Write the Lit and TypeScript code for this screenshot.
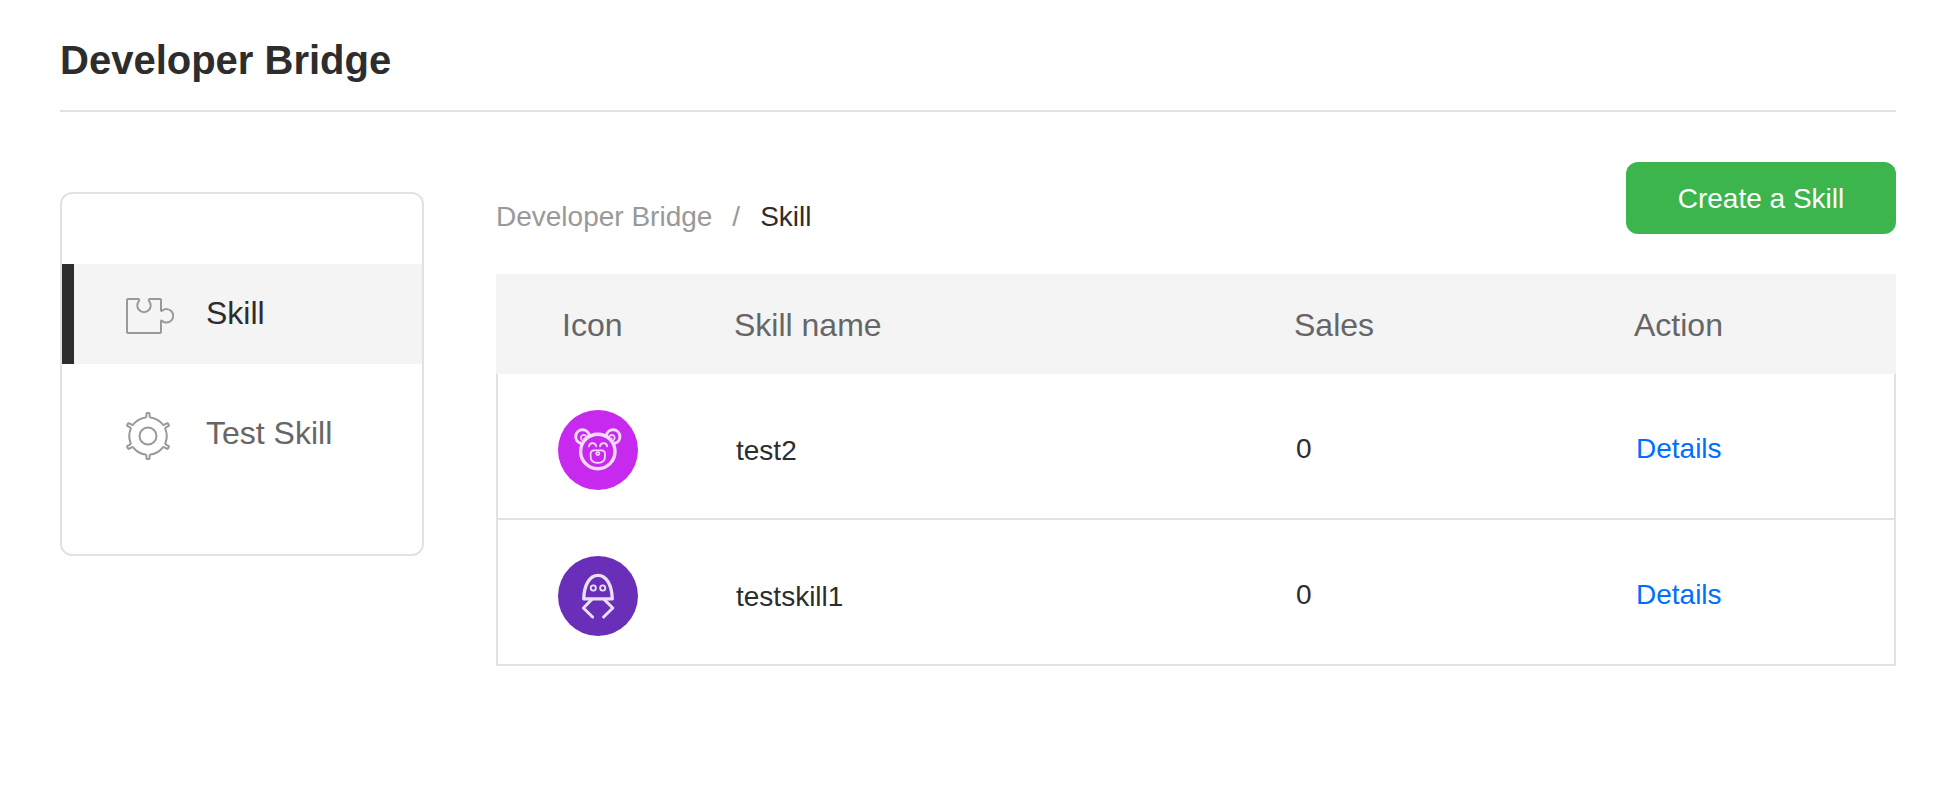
import { LitElement, html, svg, css, TemplateResult } from "lit";
import { customElement, property } from "lit/decorators.js";

type Glyph = "bear" | "robot";

interface Skill {
  glyph: Glyph;
  name: string;
  sales: number;
}

const SKILLS: Skill[] = [
  { glyph: "bear", name: "test2", sales: 0 },
  { glyph: "robot", name: "testskill1", sales: 0 },
];

/* Outline of a six-toothed gear centred on (cx, cy); the side teeth are a little longer. */
function gearPath(cx: number, cy: number): string {
  const ring = 19;
  const at = (deg: number, x: number, y: number) => {
    const a = (deg * Math.PI) / 180;
    const px = cx + x * Math.cos(a) - y * Math.sin(a);
    const py = cy + x * Math.sin(a) + y * Math.cos(a);
    return `${px.toFixed(2)} ${py.toFixed(2)}`;
  };
  let d = "";
  for (let deg = 0; deg < 360; deg += 60) {
    const tip = deg % 180 === 0 ? 23 : 23.6;
    d += deg === 0 ? `M${at(deg, -2.4, -18.6)}` : `A${ring} ${ring} 0 0 1 ${at(deg, -2.4, -18.6)}`;
    d += `Q${at(deg, -1.6, -18.9)} ${at(deg, -1.6, -19.8)}`;
    d += `L${at(deg, -1.6, -tip + 1)}Q${at(deg, -1.6, -tip)} ${at(deg, -0.6, -tip)}`;
    d += `L${at(deg, 0.6, -tip)}Q${at(deg, 1.6, -tip)} ${at(deg, 1.6, -tip + 1)}`;
    d += `L${at(deg, 1.6, -19.8)}Q${at(deg, 1.6, -18.9)} ${at(deg, 2.4, -18.6)}`;
  }
  return `${d}A${ring} ${ring} 0 0 1 ${at(0, -2.4, -18.6)}Z`;
}

const puzzleIcon = html`<svg width="48" height="36" viewBox="0 0 48 36" fill="none" stroke="#999" stroke-width="2" stroke-linejoin="round">
  <path d="M2 1H12.2Q13.9 1.4 12.9 3.1A6.7 6.7 0 1 0 23.1 3.1Q22.1 1.4 23.8 1H34Q35 1 35 2V12.3Q35.1 13.7 36.4 12.5A6.7 6.7 0 1 1 36.4 23.1Q35.1 21.9 35 23.3V34Q35 35 34 35H2Q1 35 1 34V2Q1 1 2 1Z" />
</svg>`;

const gearIcon = html`<svg width="44" height="48" viewBox="0 0 44 48" fill="none" stroke="#999" stroke-width="2" stroke-linejoin="round">
  <path d=${gearPath(22, 24)} />
  <circle cx="22" cy="24" r="8.5" />
</svg>`;

const glyphs: Record<Glyph, TemplateResult> = {
  bear: svg`<circle cx="40" cy="40" r="40" fill="#c829ee" />
    <g fill="none" stroke="#f8dcfd" stroke-linecap="round">
      <g stroke-width="3">
        <path d="M22.6 33.2A6.8 6.8 0 1 1 31.2 25.6" />
        <path d="M57 33.2A6.8 6.8 0 1 0 48.4 25.6" />
        <circle cx="39.8" cy="41.5" r="17.2" stroke-width="3.4" />
      </g>
      <g stroke-width="1.7">
        <path d="M24.6 30.5A2.9 2.9 0 1 1 28.6 27.2" />
        <path d="M55 30.5A2.9 2.9 0 1 0 51 27.2" />
        <circle cx="26.2" cy="28.3" r="0.5" stroke-width="1" />
        <circle cx="53.4" cy="28.3" r="0.5" stroke-width="1" />
        <path d="M31 36.4C31.5 32 37.7 32 38.2 36.4M42 36.4C42.5 32 48.7 32 49.2 36.4" />
        <path d="M36.2 40.3H43.4Q47 40.3 47 44V46.2Q47 52.8 39.8 52.8T32.6 46.2V44Q32.6 40.3 36.2 40.3Z" />
        <circle cx="39.8" cy="43.6" r="1.6" />
      </g>
    </g>`,
  robot: svg`<circle cx="40" cy="40" r="40" fill="#6a2fb8" />
    <g fill="none" stroke="#eae0f6" stroke-width="3.3" stroke-linecap="round" stroke-linejoin="round">
      <path d="M25.7 42.8C26.2 29 31.6 19.4 40 19.4S53.8 29 54.3 42.8Z" />
      <path d="M33.6 43.6L25.4 52L34.6 61M46.4 43.6L54.8 52L45.6 61" stroke-width="3" />
      <circle cx="35.3" cy="32" r="2.6" stroke-width="1.8" />
      <circle cx="44.7" cy="32" r="2.6" stroke-width="1.8" />
    </g>`,
};

@customElement("skill-avatar")
export class SkillAvatar extends LitElement {
  @property() glyph: Glyph = "bear";

  static styles = css`
    :host {
      display: block;
      width: 80px;
      height: 80px;
    }
    svg {
      display: block;
    }
  `;

  render() {
    return html`<svg width="80" height="80" viewBox="0 0 80 80">${glyphs[this.glyph]}</svg>`;
  }
}

@customElement("side-menu")
export class SideMenu extends LitElement {
  static styles = css`
    :host {
      display: block;
      flex: none;
      box-sizing: border-box;
      width: 364px;
      margin-top: 80px;
      padding: 70px 0;
      border: 2px solid #e2e2e2;
      border-radius: 12px;
    }
    .list {
      display: flex;
      flex-direction: column;
      gap: 20px;
    }
    .item {
      display: flex;
      align-items: center;
      box-sizing: border-box;
      height: 100px;
      padding-left: 52px;
      border-left: 12px solid transparent;
      color: #666;
      font-size: 32px;
      line-height: 40px;
    }
    .active {
      border-left-color: #2d2d2d;
      background: #f4f4f4;
      color: #2d2d2d;
    }
    .icon {
      display: flex;
      width: 80px;
      padding-top: 4px;
    }
    .label {
      padding-bottom: 2px;
    }
  `;

  render() {
    return html`<nav class="list">
      <div class="item active"><span class="icon">${puzzleIcon}</span><span class="label">Skill</span></div>
      <div class="item"><span class="icon">${gearIcon}</span><span class="label">Test Skill</span></div>
    </nav>`;
  }
}

@customElement("skill-table")
export class SkillTable extends LitElement {
  static styles = css`
    :host {
      display: block;
      color: #2d2d2d;
      font-size: 28px;
      line-height: 36px;
    }
    .head {
      display: grid;
      grid-template-columns: 172px 560px 340px 1fr;
      align-items: center;
      box-sizing: border-box;
      height: 100px;
      padding: 2px 0 0 66px;
      background: #f4f4f4;
      color: #666;
      font-size: 32px;
      line-height: 40px;
    }
    .row {
      display: grid;
      grid-template-columns: 178px 560px 340px 1fr;
      align-items: center;
      padding: 36px 0 28px 60px;
      border: 2px solid #e2e2e2;
      border-top: none;
    }
    .name {
      padding-top: 2px;
    }
    .value {
      padding-bottom: 3px;
    }
    .link {
      color: #006fff;
    }
  `;

  render() {
    return html`
      <div class="head"><span>Icon</span><span>Skill name</span><span>Sales</span><span>Action</span></div>
      ${SKILLS.map(
        (s) => html`<div class="row">
          <skill-avatar .glyph=${s.glyph}></skill-avatar>
          <span class="name">${s.name}</span>
          <span class="value">${s.sales}</span>
          <span class="value link">Details</span>
        </div>`
      )}
    `;
  }
}

@customElement("app-root")
export class AppRoot extends LitElement {
  static styles = css`
    :host {
      display: block;
      box-sizing: border-box;
      min-height: 798px;
      padding: 0 56px 0 60px;
      background: #fff;
      color: #2d2d2d;
      font-family: "Liberation Sans", Helvetica, Arial, sans-serif;
    }
    .title {
      margin: 0;
      padding: 30px 0 20px;
      border-bottom: 2px solid #e2e2e2;
      font-size: 40px;
      font-weight: 700;
      line-height: 60px;
    }
    .content {
      display: flex;
      align-items: flex-start;
      gap: 72px;
    }
    .main {
      flex: 1;
      min-width: 0;
      padding-top: 50px;
    }
    .toolbar {
      display: flex;
      align-items: flex-end;
      justify-content: space-between;
      height: 72px;
      margin-bottom: 40px;
      font-size: 28px;
      line-height: 36px;
    }
    .crumbs {
      display: flex;
      color: #999;
      line-height: 34px;
    }
    .slash {
      padding: 0 20px;
    }
    .current {
      color: #2d2d2d;
    }
    .create {
      box-sizing: border-box;
      width: 270px;
      height: 72px;
      padding: 2px 0 0;
      border: none;
      border-radius: 12px;
      background: #3bb54c;
      color: #fff;
      font: inherit;
    }
  `;

  render() {
    return html`
      <h1 class="title">Developer Bridge</h1>
      <div class="content">
        <side-menu></side-menu>
        <main class="main">
          <div class="toolbar">
            <div class="crumbs">
              <span>Developer Bridge</span><span class="slash">/</span><span class="current">Skill</span>
            </div>
            <button class="create">Create a Skill</button>
          </div>
          <skill-table></skill-table>
        </main>
      </div>
    `;
  }
}
